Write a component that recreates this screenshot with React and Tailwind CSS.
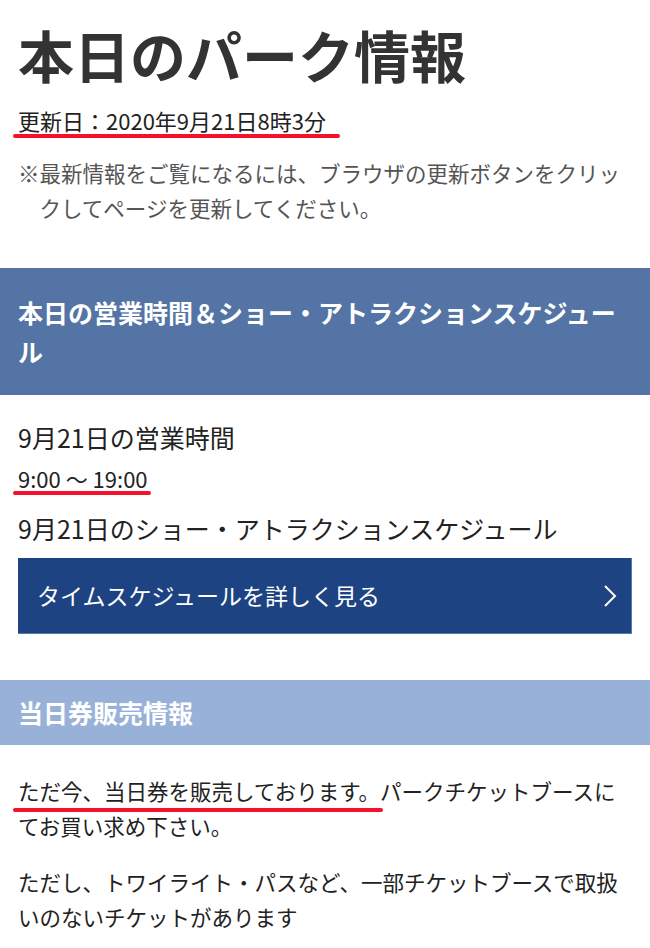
export default function App() {
  const font = { fontFamily: '"Noto Sans CJK JP", "Noto Sans", sans-serif' };
  return (
    <div className="w-[650px] bg-white text-[#222]" style={font}>
      <div className="px-[18px] pt-[20px]">
        <h1 className="text-[56px] font-bold leading-[67px] text-[#333]">本日のパーク情報</h1>
        <div className="mt-[18px] text-[22px] leading-[30px] text-[#222]">
          <span className="relative inline-block">
            更新日：2020年9月21日8時3分
            <span className="absolute -left-[5px] -right-[14px] bottom-[-3px] h-[4px] rounded-full bg-[#f5102c]"></span>
          </span>
        </div>
        <p className="mt-[20px] pl-[1em] -indent-[1em] text-[21.5px] leading-[35px] text-[#555]">
          ※最新情報をご覧になるには、ブラウザの更新ボタンをクリックしてページを更新してください。
        </p>
      </div>

      <div className="mt-[43px] bg-[#5374a5] px-[18px] pt-[25px] pb-[24px] text-[25px] font-bold leading-[39px] text-white">
        本日の営業時間＆ショー・アトラクションスケジュール
      </div>

      <div className="px-[18px]">
        <div className="mt-[25px] text-[25px] leading-[34px]">9月21日の営業時間</div>
        <div className="mt-[9px] text-[22px] leading-[30px]">
          <span className="relative inline-block">
            9:00 〜 19:00
            <span className="absolute -left-[5px] -right-[3px] bottom-[-2px] h-[4px] rounded-full bg-[#f5102c]"></span>
          </span>
        </div>
        <div className="mt-[18px] text-[25px] leading-[34px]">9月21日のショー・アトラクションスケジュール</div>
        <a className="mt-[13px] flex h-[76px] items-center justify-between border-b border-r border-[#5a78aa] bg-[#1d4382] pl-[19px] pr-[14px] text-[23px] text-white">
          <span>タイムスケジュールを詳しく見る</span>
          <svg width="14" height="22" viewBox="0 0 14 22" fill="none" stroke="white" strokeWidth="2">
            <path d="M2 1 L12 11 L2 21" />
          </svg>
        </a>
      </div>

      <div className="mt-[46px] flex h-[65px] items-center bg-[#98b1d9] px-[18px] text-[25px] font-bold text-white">
        当日券販売情報
      </div>

      <div className="px-[18px] pt-[28px] text-[21.5px] leading-[35px]">
        <p>
          <span className="relative">
            ただ今、当日券を販売しております。
            <span className="absolute -left-[5px] right-[-3px] bottom-[-6px] h-[4px] rounded-full bg-[#f5102c]"></span>
          </span>
          パークチケットブースにてお買い求め下さい。
        </p>
        <p className="mt-[21px]">
          ただし、トワイライト・パスなど、一部チケットブースで取扱いのないチケットがあります
        </p>
      </div>
    </div>
  );
}
